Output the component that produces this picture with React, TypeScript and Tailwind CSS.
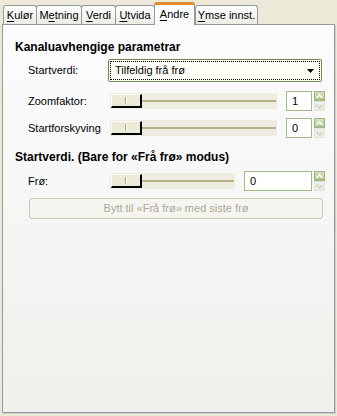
import React from "react";

const tabs = [
  { pre: "", key: "K", post: "ulør", w: "w-[34px]" },
  { pre: "M", key: "e", post: "tning", w: "w-[46px]" },
  { pre: "", key: "V", post: "erdi", w: "w-[35px]" },
  { pre: "", key: "U", post: "tvida", w: "w-[40px]" },
  { pre: "", key: "A", post: "ndre", w: "w-[41px]", active: true },
  { pre: "", key: "Y", post: "mse innst.", w: "w-[63px]" },
];

function Tab({ t }: { t: (typeof tabs)[number] }) {
  if (t.active) {
    return (
      <div
        className={`${t.w} relative z-10 -mb-px h-[23px] flex items-center justify-center rounded-t-[3px] border-x border-[#919b9c] border-t-[3px] border-t-[#e68b2c] bg-[#fcfcfe] pb-[1px]`}
      >
        <span>
          {t.pre}
          <u className="underline-offset-2">{t.key}</u>
          {t.post}
        </span>
      </div>
    );
  }
  return (
    <div
      className={`${t.w} h-[19px] -mr-px flex items-center justify-center rounded-t-[3px] border border-b-0 border-[#919b9c] bg-linear-to-b from-[#ffffff] to-[#ecebe4]`}
    >
      <span>
        {t.pre}
        <u className="underline-offset-2">{t.key}</u>
        {t.post}
      </span>
    </div>
  );
}

function Slider({ w }: { w: string }) {
  return (
    <div className={`${w} h-[16px] flex items-center bg-[#efede2]`}>
      <div className="ml-px w-[31px] h-[14px] flex items-center justify-center bg-[#ecebd8] border-t border-l border-[#fcfcf8] border-b-2 border-r-2 border-b-[#000] border-r-[#000]">
        <div className="w-[2px] h-[7px] border-l border-[#a8a38c] border-r border-r-white" />
      </div>
      <div className="flex-1 h-[2px] bg-[#b7ae8a] mr-px" />
    </div>
  );
}

function Spin() {
  return (
    <div className="ml-[2px] flex flex-col w-[11px] h-[20px]">
      <div className="h-[10px] flex items-center justify-center bg-linear-to-b from-[#d6e3bf] to-[#a9c08a] border border-[#9fb585]">
        <svg width="7" height="5" viewBox="0 0 7 5">
          <path d="M0.5 4 L3.5 1 L6.5 4" fill="none" stroke="#ffffff" strokeWidth="1.6" />
        </svg>
      </div>
      <div className="h-[10px] flex items-center justify-center bg-[#eceee6] border border-[#e2e4da]">
        <svg width="7" height="5" viewBox="0 0 7 5">
          <path d="M0.5 1 L3.5 4 L6.5 1" fill="none" stroke="#cfd2c6" strokeWidth="1.6" />
        </svg>
      </div>
    </div>
  );
}

function Entry({ w, value }: { w: string; value: string }) {
  return (
    <div className={`${w} h-[20px] flex items-center bg-white border border-[#a3bb84] pl-[5px]`}>
      {value}
    </div>
  );
}

export default function App() {
  return (
    <div className="w-[337px] h-[416px] overflow-hidden bg-[#ece9d8] font-['Liberation_Sans',sans-serif] text-[11px] leading-[13px] text-black">
      <div className="h-[24px] flex items-end pl-[3px]">
        {tabs.map((t, i) => (
          <Tab key={i} t={t} />
        ))}
      </div>
      <div className="mx-[2px] h-[389px] border border-[#919b9c] bg-linear-to-b from-[#fcfcfe] to-[#eff0eb] shadow-[1px_1px_0_#d2d0c3] flex flex-col pt-[15px]">
        <div className="pl-[12px] font-bold text-[12px] leading-[14px]">Kanaluavhengige parametrar</div>

        <div className="mt-[5px] pl-[25px] flex items-center h-[23px]">
          <div className="w-[80px]">Startverdi:</div>
          <div className="w-[214px] h-[23px] border border-[#6f8b4f] rounded-[2px] bg-[#fffff8] p-px">
            <div className="h-full flex items-center border border-dotted border-black">
              <div className="flex-1 pl-[4px]">Tilfeldig frå frø</div>
              <div className="w-px h-[15px] bg-[#c8c8bc] border-r border-r-white" />
              <div className="w-[17px] flex items-center justify-center">
                <svg width="7" height="4" viewBox="0 0 7 4">
                  <path d="M0 0 H7 L3.5 4 Z" fill="#000" />
                </svg>
              </div>
            </div>
          </div>
        </div>

        <div className="mt-[9px] pl-[25px] flex items-center">
          <div className="w-[82px]">Zoomfaktor:</div>
          <Slider w="w-[167px]" />
          <div className="w-[9px]" />
          <Entry w="w-[26px]" value="1" />
          <Spin />
        </div>

        <div className="mt-[7px] pl-[25px] flex items-center">
          <div className="w-[82px]">Startforskyving</div>
          <Slider w="w-[167px]" />
          <div className="w-[9px]" />
          <Entry w="w-[26px]" value="0" />
          <Spin />
        </div>

        <div className="mt-[12px] pl-[12px] font-bold text-[12px] leading-[14px]">
          Startverdi. (Bare for «Frå frø» modus)
        </div>

        <div className="mt-[7px] pl-[25px] flex items-center">
          <div className="w-[82px]">Frø:</div>
          <Slider w="w-[125px]" />
          <div className="w-[9px]" />
          <Entry w="w-[68px]" value="0" />
          <Spin />
        </div>

        <div className="mt-[7px] pl-[26px] pr-[11px]">
          <div className="h-[21px] flex items-center justify-center rounded-[3px] border border-[#cac8bb] bg-[#f5f4ee] text-[#aca899]">
            Bytt til «Frå frø» med siste frø
          </div>
        </div>
      </div>
    </div>
  );
}
